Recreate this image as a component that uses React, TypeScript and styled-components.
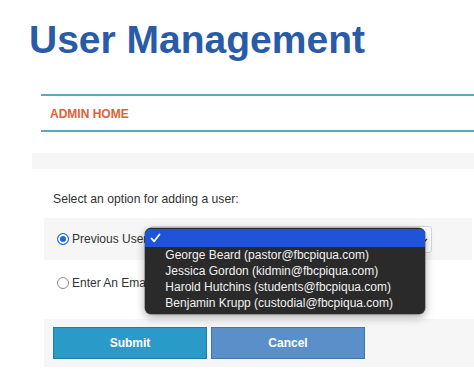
import React from "react";
import styled, { createGlobalStyle } from "styled-components";

const GlobalStyle = createGlobalStyle`
    html, body {
        margin: 0;
        padding: 0;
        background: #ffffff;
        font-family: "Liberation Sans", Arial, Helvetica, sans-serif;
    }
    * {
        box-sizing: border-box;
    }
`;

const users = [
    "George Beard (pastor@fbcpiqua.com)",
    "Jessica Gordon (kidmin@fbcpiqua.com)",
    "Harold Hutchins (students@fbcpiqua.com)",
    "Benjamin Krupp (custodial@fbcpiqua.com)",
];

export default function App() {
    return (
        <Page>
            <GlobalStyle />
            <Title>User Management</Title>
            <Nav>
                <NavLink>ADMIN HOME</NavLink>
            </Nav>
            <Strip />
            <Form>
                <Prompt>Select an option for adding a user:</Prompt>
                <OptionRow shaded>
                    <Radio checked />
                    <OptionLabel>Previous User</OptionLabel>
                    <SelectBox>
                        <Chevron width="8" height="8" viewBox="0 0 8 8">
                            <path d="M1 3 L4 6 L7 3" fill="none" stroke="#333" strokeWidth="1.2" />
                        </Chevron>
                        <Popup>
                            <PopupItem selected>
                                <Check width="11" height="10" viewBox="0 0 11 10">
                                    <path d="M1.5 5.5 L4.2 8.3 L9.5 1.5" fill="none" stroke="#fff" strokeWidth="1.8" strokeLinecap="round" strokeLinejoin="round" />
                                </Check>
                            </PopupItem>
                            {users.map(u => (
                                <PopupItem key={u}>{u}</PopupItem>
                            ))}
                        </Popup>
                    </SelectBox>
                </OptionRow>
                <OptionRow>
                    <Radio />
                    <OptionLabel clip>Enter An Email</OptionLabel>
                </OptionRow>
                <ButtonBar>
                    <Button variant="submit">Submit</Button>
                    <Button variant="cancel">Cancel</Button>
                </ButtonBar>
            </Form>
        </Page>
    );
}

const Page = styled.div`
    width: 474px;
    height: 392px;
    overflow: hidden;
`;

const Title = styled.h1`
    margin: 20px 0 0 29px;
    font-size: 39px;
    line-height: 39px;
    font-weight: 700;
    color: #2a5ba7;
`;

const Nav = styled.div`
    margin: 35px 0 0 41px;
    height: 38px;
    border-top: 2px solid #5aaabe;
    border-bottom: 2px solid #5aaabe;
    display: flex;
    align-items: center;
    padding-left: 9px;
    padding-top: 1px;
`;

const NavLink = styled.span`
    font-size: 12px;
    font-weight: 700;
    color: #e0603a;
`;

const Strip = styled.div`
    margin: 21px 0 0 32px;
    height: 16px;
    background: #f6f6f6;
`;

const Form = styled.div`
    margin: 23px 2px 0 44px;
    display: flex;
    flex-direction: column;
`;

const Prompt = styled.div`
    padding-left: 9px;
    font-size: 12.2px;
    line-height: 14px;
    color: #333;
    margin-bottom: 12px;
`;

const OptionRow = styled.div<{ shaded?: boolean }>`
    height: 42px;
    margin-bottom: 2px;
    display: flex;
    align-items: center;
    padding-left: 13px;
    background: ${p => (p.shaded ? "#f6f6f6" : "transparent")};
`;

const Radio = styled.span<{ checked?: boolean }>`
    width: 12px;
    height: 12px;
    border-radius: 50%;
    flex: none;
    border: ${p => (p.checked ? "1.5px solid #1f66e0" : "1px solid #8a8a8a")};
    background: ${p => (p.checked ? "#1f66e0" : "#fff")};
    box-shadow: ${p => (p.checked ? "inset 0 0 0 2px #fff" : "none")};
`;

const OptionLabel = styled.span<{ clip?: boolean }>`
    margin-left: 3px;
    font-size: 12px;
    color: #333;
    white-space: nowrap;
    overflow: hidden;
    max-width: ${p => (p.clip ? "73px" : "none")};
`;

const SelectBox = styled.div`
    position: relative;
    margin-left: 3px;
    width: 282px;
    height: 27px;
    flex: none;
    background: #fff;
    border: 1px solid #d6d6d6;
    border-radius: 3px;
`;

const Chevron = styled.svg`
    position: absolute;
    right: 3px;
    top: 9px;
`;

const Popup = styled.div`
    position: absolute;
    left: -6px;
    top: 1px;
    width: 280px;
    padding: 1px 0 3px;
    background: #2a2a2a;
    border-radius: 6px;
    box-shadow: 0 3px 10px rgba(0, 0, 0, 0.35), 0 0 0 0.5px rgba(0, 0, 0, 0.5);
    z-index: 2;
`;

const PopupItem = styled.div<{ selected?: boolean }>`
    height: ${p => (p.selected ? "18px" : "16px")};
    line-height: ${p => (p.selected ? "18px" : "16px")};
    padding-left: 20px;
    font-size: 12px;
    color: #f2f2f2;
    white-space: nowrap;
    position: relative;
    background: ${p => (p.selected ? "#1e55d6" : "transparent")};
    border-radius: ${p => (p.selected ? "5px 5px 0 0" : "0")};
`;

const Check = styled.svg`
    position: absolute;
    left: 5px;
    top: 4px;
`;

const ButtonBar = styled.div`
    margin-top: 13px;
    margin-right: -2px;
    padding: 8px 9px;
    background: #f6f6f6;
    display: flex;
    gap: 4px;
`;

const Button = styled.button<{ variant: "submit" | "cancel" }>`
    width: 154px;
    height: 32px;
    padding: 0;
    font-family: "Liberation Sans", Arial, sans-serif;
    font-size: 12px;
    font-weight: 700;
    color: #fff;
    background: ${p => (p.variant === "submit" ? "#2a9bc8" : "#5b8fc9")};
    border: 1px solid ${p => (p.variant === "submit" ? "#1f7ca3" : "#4273ad")};
    border-radius: 0;
`;
